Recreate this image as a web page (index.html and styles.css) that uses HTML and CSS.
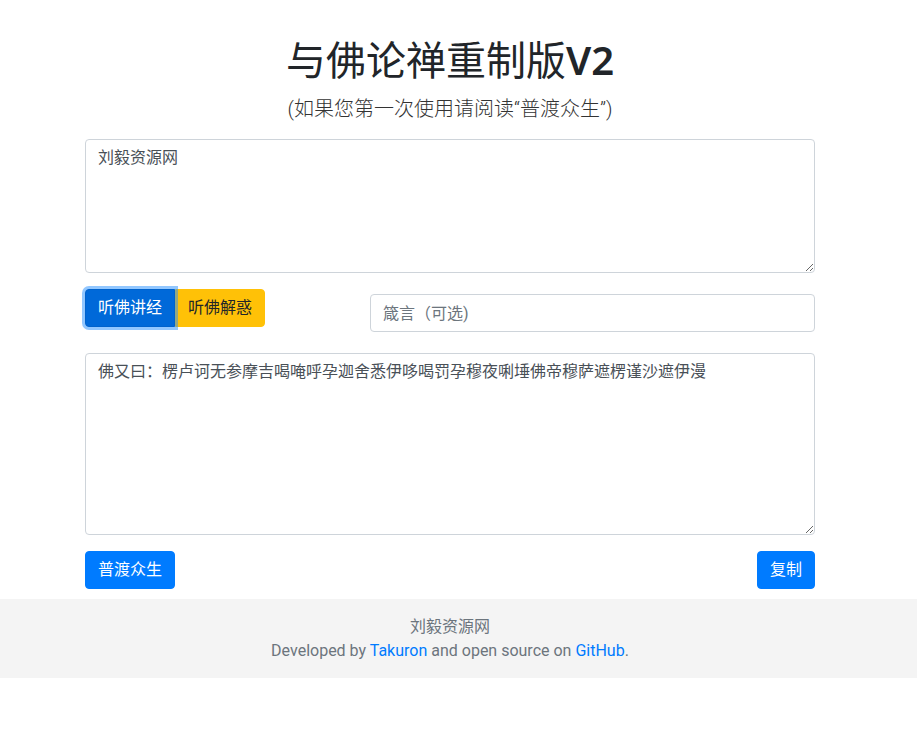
FILE: index.html
```html
<!DOCTYPE html>
<html lang="zh-CN">
<head>
<meta charset="utf-8">
<title>与佛论禅重制版V2</title>
<link rel="stylesheet" href="styles.css">
</head>
<body>
<div class="layout">
  <main class="container">
    <h1 class="title">与佛论禅重制版<span class="version">V2</span></h1>
    <p class="lead">(如果您第一次使用请阅读“普渡众生”)</p>
    <div class="form-group">
      <textarea class="form-control plain" rows="5">刘毅资源网</textarea>
    </div>
    <div class="controls">
      <div class="btn-group">
        <button class="btn btn-primary is-focused">听佛讲经</button>
        <button class="btn btn-warning">听佛解惑</button>
      </div>
      <input class="form-control key" type="text" placeholder="箴言（可选)">
    </div>
    <div class="form-group">
      <textarea class="form-control cipher">佛又曰：楞卢诃无参摩吉喝唵呼孕迦舍悉伊哆喝罚孕穆夜唎埵佛帝穆萨遮楞谨沙遮伊漫</textarea>
    </div>
    <div class="actions">
      <button class="btn btn-primary">普渡众生</button>
      <button class="btn btn-primary">复制</button>
    </div>
  </main>
</div>
<footer class="footer">
  <div class="footer-inner">
    <div>刘毅资源网</div>
    <div>Developed by <a href="#">Takuron</a> and open source on <a href="#">GitHub</a>.</div>
  </div>
</footer>
</body>
</html>
```

FILE: styles.css
```css
* { box-sizing: border-box; }

html, body {
  margin: 0;
  padding: 0;
}

body {
  font-family: Roboto, "Noto Sans CJK SC", sans-serif;
  font-size: 16px;
  line-height: 1.5;
  color: #212529;
  background: #fff;
}

.layout {
  width: 900px;
}

.container {
  width: 760px;
  margin: 0 auto;
  padding: 38px 15px 0;
}

.title {
  margin: 0 0 8px;
  height: 48px;
  font-size: 40px;
  line-height: 48px;
  font-weight: 400;
  text-align: center;
  color: #212529;
}

.version {
  font-family: "Noto Sans", sans-serif;
  font-weight: 600;
  line-height: 1;
}

.lead {
  margin: 0 0 15px;
  height: 30px;
  font-size: 20px;
  line-height: 30px;
  font-weight: 300;
  text-align: center;
  color: #333;
}

.form-group {
  margin-bottom: 16px;
}

.form-control {
  display: block;
  width: 100%;
  padding: 6px 12px;
  font-family: inherit;
  font-size: 16px;
  line-height: 24px;
  color: #495057;
  background: #fff;
  border: 1px solid #ced4da;
  border-radius: 4px;
  outline: none;
}

textarea.form-control {
  resize: vertical;
}

.plain { height: 134px; }
.cipher { height: 182px; }

.controls {
  display: flex;
  align-items: flex-start;
  justify-content: space-between;
  margin-bottom: 21px;
}

.btn-group {
  display: flex;
}

.btn {
  display: inline-block;
  height: 38px;
  padding: 6px 12px;
  font-family: inherit;
  font-size: 16px;
  line-height: 24px;
  font-weight: 400;
  border: 1px solid transparent;
  border-radius: 4px;
  cursor: pointer;
}

.btn-primary {
  color: #fff;
  background: #007bff;
  border-color: #007bff;
}

.btn-primary.is-focused {
  background: #0069d9;
  border-color: #0062cc;
  box-shadow: 0 0 0 3px rgba(38, 143, 255, 0.5);
  position: relative;
  z-index: 1;
}

.btn-warning {
  color: #212529;
  background: #ffc107;
  border-color: #ffc107;
}

.btn-group .btn:first-child {
  border-top-right-radius: 0;
  border-bottom-right-radius: 0;
}

.btn-group .btn:last-child {
  border-top-left-radius: 0;
  border-bottom-left-radius: 0;
}

.key {
  width: 445px;
  margin-top: 5px;
  height: 38px;
}

.key::placeholder {
  color: #6c757d;
}

.actions {
  display: flex;
  justify-content: space-between;
  padding-bottom: 10px;
}

.footer {
  background: #f4f4f4;
  color: #6c757d;
}

.footer-inner {
  width: 900px;
  padding: 16px 0 15px;
  text-align: center;
}

.footer-inner div {
  height: 24px;
}

.footer a {
  color: #007bff;
  text-decoration: none;
}
```
